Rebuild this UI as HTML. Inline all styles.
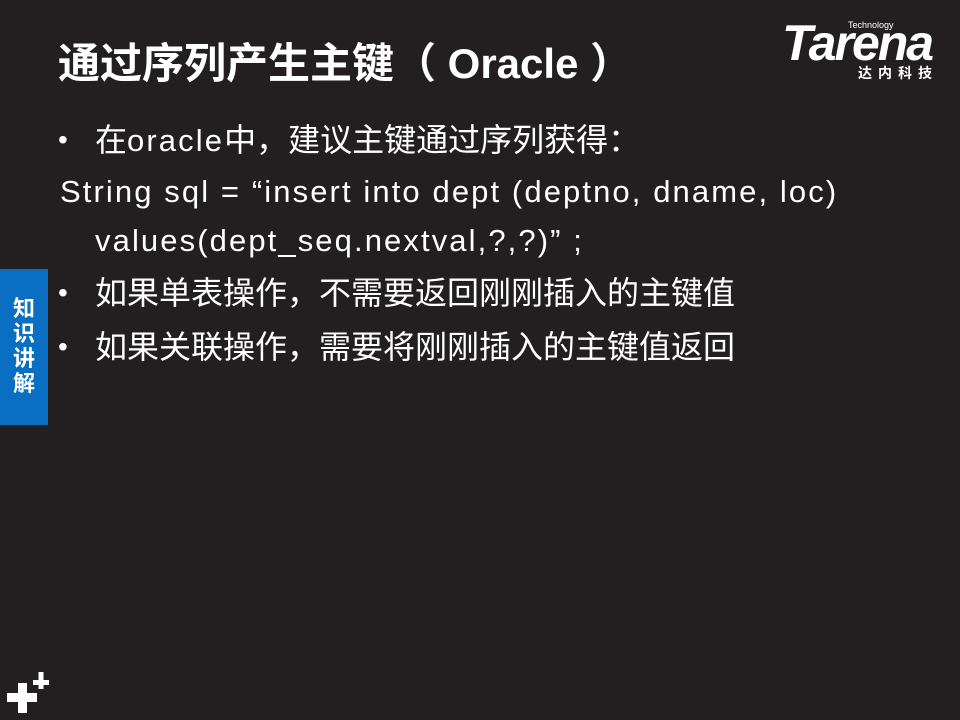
<!DOCTYPE html>
<html><head><meta charset="utf-8"><style>
body{margin:0;width:960px;height:720px;background:#231f20;overflow:hidden;position:relative;font-family:"Liberation Sans","Noto Sans CJK SC",sans-serif;color:#fff}
.t{position:absolute;left:58px;top:38px;font-size:42px;font-weight:bold;white-space:nowrap;line-height:52px}
.l{position:absolute;font-size:31px;white-space:nowrap;line-height:40px}
.c{font-size:32px}
.b{position:absolute;left:58px;font-size:28px;line-height:40px}
.e{letter-spacing:2.1px}
.side{position:absolute;left:0;top:269px;width:48px;height:156px;background:#0a6fc2}
.side div{position:absolute;left:12px;top:27px;width:24px;font-size:22px;font-weight:bold;line-height:25px;text-align:center}
</style></head><body>
<div class="t">通过序列产生主键（ Oracle ）</div>
<div style="position:absolute;left:782px;top:18px;font-size:50px;font-weight:bold;font-style:italic;letter-spacing:-2px;line-height:50px">Tarena</div>
<div style="position:absolute;left:848px;top:20px;font-size:9px">Technology</div>
<div style="position:absolute;left:858px;top:63px;font-size:14px;font-weight:bold;letter-spacing:6px">达内科技</div>
<div class="b" style="top:120px">•</div>
<div class="l c" style="left:95px;top:120px">在<span class="e" style="font-size:31px">oracle</span>中，建议主键通过序列获得：</div>
<div class="l e" style="left:60px;top:172px">String sql = “insert into dept (deptno, dname, loc)</div>
<div class="l e" style="left:95px;top:221px">values(dept_seq.nextval,?,?)” ;</div>
<div class="b" style="top:273px">•</div>
<div class="l c" style="left:95px;top:273px">如果单表操作，不需要返回刚刚插入的主键值</div>
<div class="b" style="top:327px">•</div>
<div class="l c" style="left:95px;top:327px">如果关联操作，需要将刚刚插入的主键值返回</div>
<div class="side"><div>知识讲解</div></div>
<svg style="position:absolute;left:0;top:660px" width="60" height="60"><g fill="#fff"><rect x="7" y="33" width="30" height="9"/><rect x="18" y="23" width="9" height="30"/><rect x="33" y="20" width="16" height="5"/><rect x="38.5" y="12" width="5" height="17"/></g></svg>
</body></html>
